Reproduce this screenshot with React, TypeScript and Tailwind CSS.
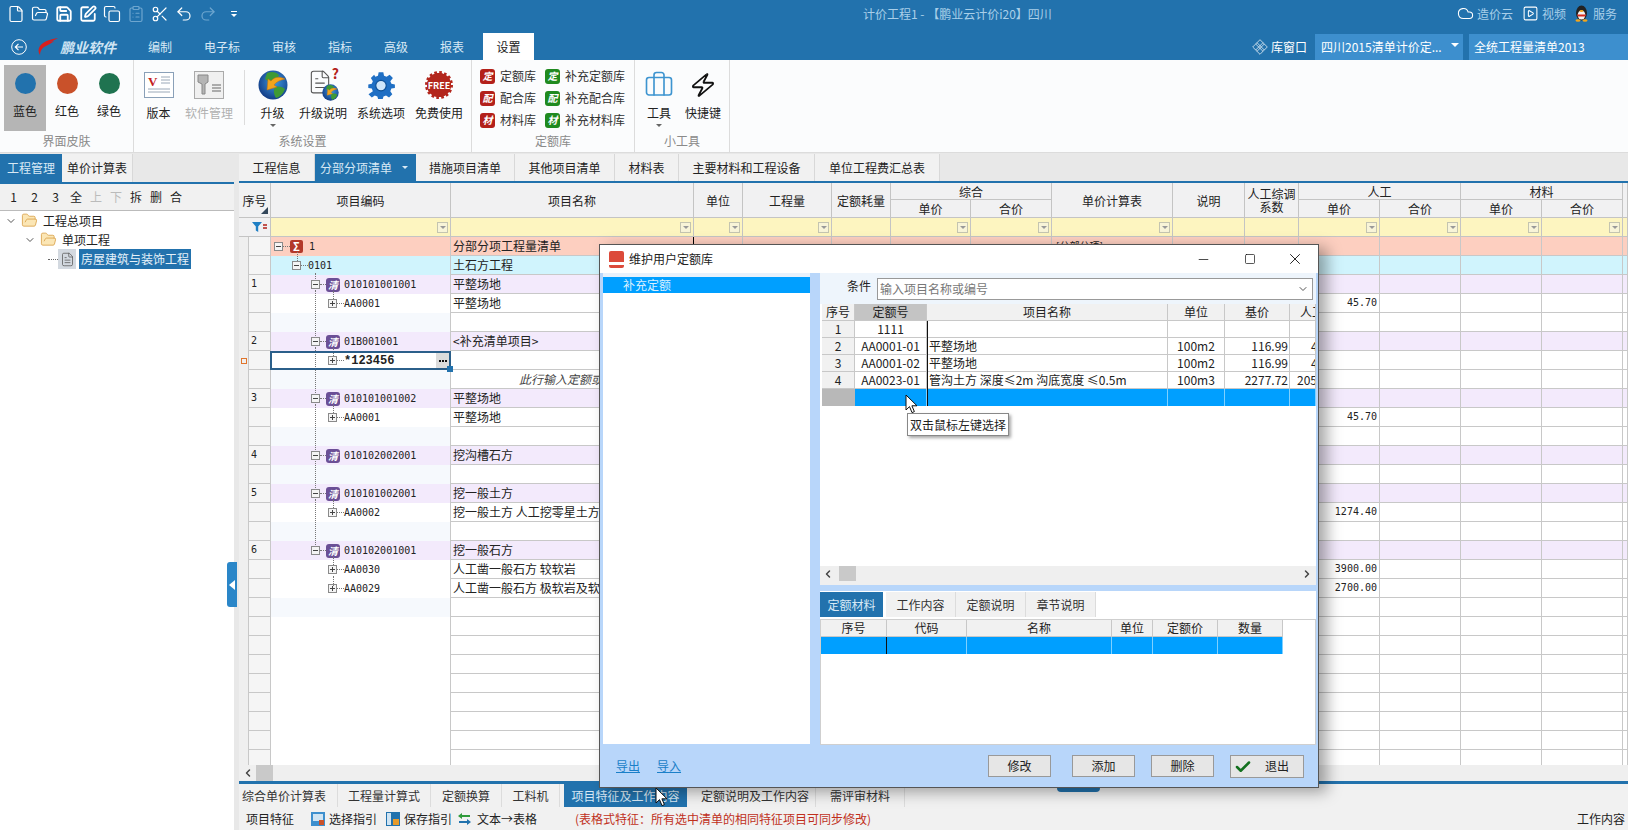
import { Briefcase, ChevronDown, ChevronLeft, ChevronRight, ChevronDown as Chev, ClipboardList, Cloud, Copy, File, FileText, FolderOpen, Redo2, Save, Scissors, SquarePen, SquarePlay, Undo2, X, Minus, Square, Zap, Check } from 'lucide-react';

const GRID = 'grid grid-cols-[9px_23px_180px_243px_49px_89px_59px_80px_81px_121px_72px_54px_81px_81px_81px_81px_1fr]';
const CELL = 'border-r border-b border-[#c8c8c8]';
const MONO = "font-['DejaVu_Sans_Mono',monospace] text-[10px]";

type Row = {
  seq?: string;
  level?: number;
  kind?: 'sum' | 'qing' | 'ding' | 'part';
  code?: string;
  name?: string;
  price?: string;
  bg?: string;
};

const PURPLE = 'bg-[#f3eafc]';

const rows: Row[] = [
  { level: 0, kind: 'sum', code: '1', name: '分部分项工程量清单', bg: 'bg-[#fdcfc0]' },
  { level: 1, kind: 'part', code: '0101', name: '土石方工程', bg: 'bg-[#d0f4fd]' },
  { seq: '1', level: 2, kind: 'qing', code: '010101001001', name: '平整场地', bg: PURPLE },
  { level: 3, kind: 'ding', code: 'AA0001', name: '平整场地', price: '45.70' },
  {},
  { seq: '2', level: 2, kind: 'qing', code: '01B001001', name: '<补充清单项目>', bg: PURPLE },
  { level: 3, kind: 'ding', code: '*123456' },
  { name: '此行输入定额或清单' },
  { seq: '3', level: 2, kind: 'qing', code: '010101001002', name: '平整场地', bg: PURPLE },
  { level: 3, kind: 'ding', code: 'AA0001', name: '平整场地', price: '45.70' },
  {},
  { seq: '4', level: 2, kind: 'qing', code: '010102002001', name: '挖沟槽石方', bg: PURPLE },
  {},
  { seq: '5', level: 2, kind: 'qing', code: '010101002001', name: '挖一般土方', bg: PURPLE },
  { level: 3, kind: 'ding', code: 'AA0002', name: '挖一般土方 人工挖零星土方', price: '1274.40' },
  {},
  { seq: '6', level: 2, kind: 'qing', code: '010102001001', name: '挖一般石方', bg: PURPLE },
  { level: 3, kind: 'ding', code: 'AA0030', name: '人工凿一般石方 较软岩', price: '3900.00' },
  { level: 3, kind: 'ding', code: 'AA0029', name: '人工凿一般石方 极软岩及软岩', price: '2700.00' },
  {},
  { code: '' }, { code: '' }, { code: '' }, { code: '' }, { code: '' }, { code: '' }, { code: '' }, { code: '' },
];

const levelPad = ['pl-[3px]', 'pl-[21px]', 'pl-[40px]', 'pl-[57px]'];

function ExpandBox({ plus }: { plus?: boolean }) {
  return (
    <svg width="9" height="9" viewBox="0 0 9 9" className="shrink-0">
      <rect x="0.5" y="0.5" width="8" height="8" fill="#f4f4f4" stroke="#8a8a8a" />
      <path d="M2 4.5h5" stroke="#444" />
      {plus && <path d="M4.5 2v5" stroke="#444" />}
    </svg>
  );
}

function FilterBox() {
  return (
    <div className="flex h-[11px] w-[11px] items-center justify-center border border-[#c4c4b0] bg-[#f8f4d8]">
      <div className="h-0 w-0 border-x-[3px] border-t-[3px] border-x-transparent border-t-[#999]" />
    </div>
  );
}

function RibbonBtn({ label, icon, w, muted, arrow }: { label: string; icon: React.ReactNode; w: string; muted?: boolean; arrow?: boolean }) {
  return (
    <div className={`relative flex h-[66px] shrink-0 flex-col items-center ${w}`}>
      <div className="flex h-[40px] items-center justify-center">{icon}</div>
      <div className={`h-[16px] whitespace-nowrap text-[12px] leading-[16px] ${muted ? 'text-[#b0b0b0]' : 'text-[#222]'}`}>{label}</div>
      {arrow && <div className="mt-[3px] h-0 w-0 border-x-[3px] border-t-[3px] border-x-transparent border-t-[#666]" />}
    </div>
  );
}

function SkinBtn({ label, color, active }: { label: string; color: string; active?: boolean }) {
  return (
    <div className={`flex h-[66px] w-[42px] flex-col items-center pt-[8px] ${active ? 'bg-[#b5b5b5]' : ''}`}>
      <div className={`h-[21px] w-[21px] rounded-full ${color}`} />
      <div className="mt-[9px] text-[12px] leading-[16px] text-[#222]">{label}</div>
    </div>
  );
}

function DbItem({ ch, label, green }: { ch: string; label: string; green?: boolean }) {
  return (
    <div className="flex h-[22px] items-center gap-[5px]">
      <div className={`flex h-[15px] w-[15px] items-center justify-center rounded-[3px] text-[10px] font-bold italic leading-none text-white ${green ? 'bg-[#1f8a1f]' : 'bg-[#b3201a]'}`}>{ch}</div>
      <span className="whitespace-nowrap text-[12px] leading-[16px] text-[#333]">{label}</span>
    </div>
  );
}

function Group({ title, w, children }: { title: string; w: string; children: React.ReactNode }) {
  return (
    <div className={`flex h-full shrink-0 flex-col border-r border-[#dcdcdc] ${w}`}>
      <div className="h-[71px] pt-[5px]">{children}</div>
      <div className="flex-1 text-center text-[12px] leading-[20px] text-[#8a8a8a]">{title}</div>
    </div>
  );
}

function Globe({ size = 30 }: { size?: number }) {
  return (
    <svg width={size} height={size} viewBox="0 0 30 30">
      <defs>
        <radialGradient id="globeFill" cx="0.55" cy="0.4" r="0.7">
          <stop offset="0" stopColor="#3f9be0" />
          <stop offset="1" stopColor="#0c2f7a" />
        </radialGradient>
      </defs>
      <circle cx="15" cy="15" r="14.5" fill="url(#globeFill)" />
      <path d="M9 3c5-2 9-1 12 2-1 4-4 3-6 5-3 2-6 1-8-1zM17 17c4-1 8 0 10 2-2 5-5 8-9 9-2-3-3-8-1-11z" fill="#3f9a35" />
      <path d="M27 9c-6-3-11-2-14 2l-3-2-1 11 10-3-3-2c2-3 6-5 11-6z" fill="#f3a41c" stroke="#c46f0a" strokeWidth="0.5" />
    </svg>
  );
}

function Cursor() {
  return (
    <svg width="13" height="21" viewBox="0 0 13 21">
      <path d="M1 1v15l3.5-3.4 2.5 6 2.4-1-2.5-5.8H12z" fill="#fff" stroke="#111" strokeWidth="1" />
    </svg>
  );
}

function Penguin() {
  return (
    <svg width="15" height="17" viewBox="0 0 15 17">
      <ellipse cx="7.5" cy="8" rx="5.5" ry="7.5" fill="#222" />
      <ellipse cx="7.5" cy="10" rx="3.8" ry="4.5" fill="#f4f4f4" />
      <path d="M3 9.5h9l-1 2H4z" fill="#d8291c" />
      <ellipse cx="7.5" cy="6" rx="2" ry="1" fill="#f2a51c" />
      <ellipse cx="4" cy="15.5" rx="2.5" ry="1.2" fill="#f2a51c" />
      <ellipse cx="11" cy="15.5" rx="2.5" ry="1.2" fill="#f2a51c" />
    </svg>
  );
}

function TitleBar() {
  const icons = [File, FolderOpen, Save, SquarePen, Copy, ClipboardList, Scissors, Undo2, Redo2];
  return (
    <div className="flex h-[33px] items-center pb-[6px] text-[12px] text-[#a9cfe9]">
      <div className="flex w-[863px] items-center pl-[4px]">
        {icons.map((Icon, i) => (
          <div key={i} className="flex w-[24px] justify-center">
            <Icon size={18} strokeWidth={i > 1 && i < 4 ? 2.4 : 1.6} className={i === 5 || i === 8 ? 'text-[#6ea6cf]' : 'text-white'} />
          </div>
        ))}
        <div className="ml-[11px] flex flex-col items-center gap-[2px]">
          <div className="h-px w-[6px] bg-white" />
          <div className="h-0 w-0 border-x-[3px] border-t-[3px] border-x-transparent border-t-white" />
        </div>
      </div>
      <div className="whitespace-nowrap">计价工程1 - 【鹏业云计价i20】四川</div>
      <div className="ml-auto flex items-center pr-[11px]">
        <Cloud size={17} strokeWidth={1.5} className="text-white" />
        <span className="ml-[3px]">造价云</span>
        <SquarePlay size={17} strokeWidth={1.5} className="ml-[9px] text-white" />
        <span className="ml-[3px]">视频</span>
        <div className="ml-[8px]"><Penguin /></div>
        <span className="ml-[4px]">服务</span>
      </div>
    </div>
  );
}

function NavBar() {
  const tabs = [
    ['编制', 'w-[56px]'], ['电子标', 'w-[68px]'], ['审核', 'w-[56px]'],
    ['指标', 'w-[56px]'], ['高级', 'w-[56px]'], ['报表', 'w-[56px]'],
  ];
  return (
    <div className="flex h-[27px] items-stretch text-[12px]">
      <div className="flex w-[132px] items-center pl-[11px]">
        <svg width="16" height="16" viewBox="0 0 16 16" className="shrink-0">
          <circle cx="8" cy="8" r="7.3" fill="none" stroke="#fff" />
          <path d="M12 8H4.5M7.5 4.8 4.3 8l3.2 3.2" fill="none" stroke="#fff" strokeWidth="1.2" />
        </svg>
        <svg width="22" height="20" viewBox="0 0 22 20" className="ml-[10px] shrink-0">
          <path d="M21 1C14 2 7 4 3 9c-2 3-2 6 0 9 0-3 1-6 4-8 4-2 8-4 10-6l-5 1c3-1 6-2 9-4z" fill="#d81e1e" />
        </svg>
        <span className="ml-px whitespace-nowrap text-[14px] font-bold italic leading-none text-[#cfe4f3]">鹏业软件</span>
      </div>
      {tabs.map(([t, w]) => (
        <div key={t} className={`flex items-center justify-center text-[#d8e9f5] ${w}`}>{t}</div>
      ))}
      <div className="ml-[3px] flex w-[51px] items-center justify-center bg-white text-[#222]">设置</div>
      <div className="ml-auto flex items-stretch pt-[1px] text-white">
        <div className="flex items-center pr-[8px]">
          <svg width="16" height="16" viewBox="0 0 16 16">
            <path d="M8 .7 15.3 8 8 15.3.7 8z M5 3.7 12.3 11M3.7 5 11 12.3M11 3.7 3.7 11M12.3 5 5 12.3" fill="none" stroke="#fff" strokeWidth="0.7" />
          </svg>
          <span className="ml-[3px]">库窗口</span>
        </div>
        <div className="flex w-[148px] items-center justify-between bg-[#3d8fce] pl-[6px] pr-[4px]">
          <span className="whitespace-nowrap">四川2015清单计价定...</span>
          <div className="mb-[4px] h-0 w-0 border-x-[4px] border-t-[4px] border-x-transparent border-t-white" />
        </div>
        <div className="ml-[6px] flex w-[159px] items-center bg-[#3d8fce] pl-[5px]">全统工程量清单2013</div>
      </div>
    </div>
  );
}

function Ribbon() {
  return (
    <div className="flex h-[93px] border-b border-[#dcdcdc] bg-[#fbfcfd]">
      <Group title="界面皮肤" w="w-[134px]">
        <div className="flex pl-[4px]">
          <SkinBtn label="蓝色" color="bg-[#2272ad]" active />
          <SkinBtn label="红色" color="bg-[#c9512a]" />
          <SkinBtn label="绿色" color="bg-[#1f7350]" />
        </div>
      </Group>
      <Group title="系统设置" w="w-[338px]">
        <div className="flex">
          <RibbonBtn w="w-[49px]" label="版本" icon={
            <svg width="30" height="26" viewBox="0 0 30 26">
              <rect x="0.5" y="0.5" width="29" height="25" fill="#fff" stroke="#8aa0b8" />
              <text x="4" y="14" fontSize="13" fontWeight="700" fontFamily="Liberation Serif" fill="#c4201c">V</text>
              <path d="M17 5h9M17 8h9M17 11h9M4 17h22M4 20h22" stroke="#9aa8b8" />
            </svg>} />
          <RibbonBtn w="w-[52px]" muted label="软件管理" icon={
            <svg width="30" height="28" viewBox="0 0 30 28">
              <rect x="0.5" y="0.5" width="29" height="27" fill="#f0f0f0" stroke="#aaa" />
              <path d="M4 4h10v7l-3 2v10H8v-10L4 11z" fill="#b5b5b5" stroke="#888" />
              <path d="M18 14h9M18 17h9M18 20h9" stroke="#666" />
            </svg>} />
          <div className="ml-[9px] mr-[3px] mt-[5px] h-[55px] w-px bg-[#dcdcdc]" />
          <RibbonBtn w="w-[49px]" arrow label="升级" icon={<Globe />} />
          <RibbonBtn w="w-[52px]" label="升级说明" icon={
            <div className="relative h-[32px] w-[32px]">
              <FileText size={26} strokeWidth={1} className="absolute left-0 top-0 text-[#555]" />
              <span className="absolute right-0 top-[-4px] text-[14px] font-bold leading-[16px] text-[#b3201a]">?</span>
              <div className="absolute bottom-0 right-0"><Globe size={17} /></div>
            </div>} />
          <RibbonBtn w="w-[64px]" label="系统选项" icon={
            <svg width="28" height="28" viewBox="0 0 24 24">
              <path d="M10 1h4l.6 3 2.2 1 2.6-1.7 2.8 2.8L20 8.7l.9 2.2 3 .6v3l-3 .6-.9 2.2 1.7 2.6-2.8 2.8-2.6-1.7-2.2.9-.6 2h-4l-.6-2-2.2-.9-2.6 1.7-2.8-2.8L5 17.300l-.9-2.200-3-.6v-3l3-.6.9-2.200-1.700-2.600 2.800-2.800L7.200 5l2.200-1z" fill="#1f6fc4" />
              <circle cx="12" cy="12.500" r="4.500" fill="#cfe6fa" stroke="#0c4f96" />
            </svg>} />
          <RibbonBtn w="w-[52px]" label="免费使用" icon={
            <div className="relative flex h-[28px] w-[28px] items-center justify-center">
              <svg width="28" height="28" viewBox="0 0 28 28" className="absolute inset-0">
                <circle cx="14" cy="14" r="12" fill="#b3261c" stroke="#b3261c" strokeWidth="4" strokeDasharray="2.500 2.200" />
                <circle cx="14" cy="14" r="12" fill="#b3261c" />
              </svg>
              <span className="relative text-[9px] font-bold leading-none text-white">FREE</span>
            </div>} />
        </div>
      </Group>
      <Group title="定额库" w="w-[163px]">
        <div className="grid grid-cols-[65px_1fr] pl-[8px]">
          <DbItem ch="定" label="定额库" />
          <DbItem ch="定" label="补充定额库" green />
          <DbItem ch="配" label="配合库" />
          <DbItem ch="配" label="补充配合库" green />
          <DbItem ch="材" label="材料库" />
          <DbItem ch="材" label="补充材料库" green />
        </div>
      </Group>
      <Group title="小工具" w="w-[95px]">
        <div className="flex pl-[2px]">
          <RibbonBtn w="w-[44px]" arrow label="工具" icon={<Briefcase size={30} strokeWidth={1.3} className="text-[#3d94d0]" />} />
          <RibbonBtn w="w-[44px]" label="快捷键" icon={<Zap size={26} strokeWidth={1.8} className="-skew-x-12 text-[#111]" />} />
        </div>
      </Group>
    </div>
  );
}

function LeftPanel() {
  const tools = [
    ['1', 'w-[21px]'], ['2', 'w-[21px]'], ['3', 'w-[21px]'], ['全', 'w-[20px]'], ['上', 'w-[20px] text-[#bbb]'],
    ['下', 'w-[20px] text-[#bbb]'], ['拆', 'w-[20px]'], ['删', 'w-[20px]'], ['合', 'w-[20px]'],
  ];
  return (
    <div className="flex w-[234px] shrink-0 flex-col">
      <div className="mt-px flex h-[28px] text-[12px]">
        <div className="flex w-[62px] items-center justify-center bg-[#2272ad] text-[#d8e9f5]">工程管理</div>
        <div className="flex w-[71px] items-center justify-center border-r border-[#d8d8d8] bg-[#f1f1f1] text-[#222]">单价计算表</div>
      </div>
      <div className="h-[2px] bg-[#2272ad]" />
      <div className="flex h-[26px] items-center bg-[#f1f1f1] pl-[3px] text-[12px] text-[#222]">
        {tools.map(([t, c]) => (
          <div key={t} className={`text-center ${c}`}>{t}</div>
        ))}
      </div>
      <div className="relative flex-1 border-t border-[#bbb] bg-white text-[12px] text-[#222]">
        <div className="flex h-[19px] items-center pl-[5px]">
          <Chev size={12} strokeWidth={2} className="text-[#555]" />
          <FolderOpen size={17} strokeWidth={1.2} className="ml-[4px] fill-[#fbe6b5] text-[#d9a24a]" />
          <span className="ml-[5px]">工程总项目</span>
        </div>
        <div className="flex h-[19px] items-center pl-[24px]">
          <Chev size={12} strokeWidth={2} className="text-[#555]" />
          <FolderOpen size={17} strokeWidth={1.2} className="ml-[4px] fill-[#fbe6b5] text-[#d9a24a]" />
          <span className="ml-[5px]">单项工程</span>
        </div>
        <div className="flex h-[20px] items-center pl-[48px]">
          <div className="h-px w-[10px] border-t border-dotted border-[#666]" />
          <div className="flex h-[20px] w-[18px] items-center justify-center bg-[#d3d9e0]">
            <FileText size={15} strokeWidth={1.2} className="text-[#555]" />
          </div>
          <div className="ml-[3px] flex h-[20px] w-[112px] items-center justify-center whitespace-nowrap bg-[#2272ad] text-[#e5f1f9]">房屋建筑与装饰工程</div>
        </div>
      </div>
    </div>
  );
}

function MainTabs() {
  const tabs = [
    ['工程信息', 'w-[76px]'],
    ['措施项目清单', 'w-[99px]'], ['其他项目清单', 'w-[100px]'], ['材料表', 'w-[64px]'],
    ['主要材料和工程设备', 'w-[136px]'], ['单位工程费汇总表', 'w-[125px]'],
  ];
  return (
    <div className="mt-px flex h-[27px] text-[12px] text-[#222]">
      <div className={`flex items-center justify-center border-r border-[#d8d8d8] bg-[#f1f1f1] ${tabs[0][1]}`}>{tabs[0][0]}</div>
      <div className="flex w-[101px] items-center justify-between bg-[#2272ad] pl-[5px] pr-[8px] text-[#d8e9f5]">
        分部分项清单
        <div className="h-0 w-0 border-x-[3px] border-t-[3px] border-x-transparent border-t-[#d8e9f5]" />
      </div>
      {tabs.slice(1).map(([t, w]) => (
        <div key={t} className={`flex items-center justify-center border-r border-[#d8d8d8] bg-[#f1f1f1] ${w}`}>{t}</div>
      ))}
    </div>
  );
}

function GridHead() {
  const HEAD = 'flex items-center justify-center border-r border-b border-[#c4c4c4] bg-[#f1f1f2] text-[12px] leading-[13px] text-[#222]';
  return (
    <>
      <div className={`${GRID} grid-rows-[17px_18px]`}>
        <div className={`relative col-span-2 row-span-2 ${HEAD}`}>
          序号
          <div className="absolute bottom-[3px] right-[2px] h-0 w-0 border-b-[7px] border-l-[7px] border-b-[#33475b] border-l-transparent" />
        </div>
        <div className={`row-span-2 ${HEAD}`}>项目编码</div>
        <div className={`row-span-2 ${HEAD}`}>项目名称</div>
        <div className={`row-span-2 ${HEAD}`}>单位</div>
        <div className={`row-span-2 ${HEAD}`}>工程量</div>
        <div className={`row-span-2 ${HEAD}`}>定额耗量</div>
        <div className={`col-span-2 ${HEAD}`}>综合</div>
        <div className={`row-span-2 ${HEAD}`}>单价计算表</div>
        <div className={`row-span-2 ${HEAD}`}>说明</div>
        <div className={`row-span-2 whitespace-pre-line text-center ${HEAD}`}>{'人工综调\n系数'}</div>
        <div className={`col-span-2 ${HEAD}`}>人工</div>
        <div className={`col-span-2 ${HEAD}`}>材料</div>
        <div className={`row-span-2 ${HEAD}`} />
        <div className={HEAD}>单价</div>
        <div className={HEAD}>合价</div>
        <div className={HEAD}>单价</div>
        <div className={HEAD}>合价</div>
        <div className={HEAD}>单价</div>
        <div className={HEAD}>合价</div>
      </div>
      <div className={`${GRID} h-[19px] bg-[#fdf5c0]`}>
        <div className="col-span-2 flex items-center justify-end border-r border-b border-[#c4c4c4] bg-[#f1f1f2] pr-[2px]">
          <svg width="16" height="10" viewBox="0 0 16 10">
            <path d="M0 0h10L6.200 4.500V10L3.800 8.500V4.500z" fill="#1f7fc4" />
            <path d="M11 3h4M11 6h4" stroke="#b3201a" strokeWidth="1.400" />
          </svg>
        </div>
        {[true, true, true, true, false, true, true, true, false, false, true, true, true, true, false].map((f, i) => (
          <div key={i} className="flex items-center justify-end border-r border-b border-[#c4c4c4] pr-[2px]">
            {f && <FilterBox />}
          </div>
        ))}
      </div>
    </>
  );
}

function Link() {
  return <span className="w-[7px] shrink-0 border-t border-dotted border-[#777]" />;
}

function DataRow({ row, i }: { row: Row; i: number }) {
  const selected = i === 6;
  const blank = !row.code && !row.bg;
  const before = Array.from({ length: 8 });
  return (
    <div className={`${GRID} h-[19px] text-[12px] leading-[18px] text-[#222] ${row.bg ?? 'bg-white'}`}>
      <div className="flex items-center justify-center bg-[#efefef]">
        {selected && <div className="h-[6px] w-[6px] border border-[#e0752c]" />}
      </div>
      <div className={`${CELL} border-l bg-[#f5f5f5] pl-[2px] ${MONO} leading-[18px]`}>{row.seq}</div>
      <div className={`relative flex items-center border-r border-[#c8c8c8] ${levelPad[row.level ?? 0]} ${blank && i < 20 ? 'bg-[#f6f9fd]' : ''}`}>
        {row.kind && <ExpandBox plus={row.kind === 'ding'} />}
        {row.kind === 'sum' && (
          <>
            <Link />
            <span className="flex h-[13px] w-[13px] items-center justify-center rounded-[2px] bg-[#b3392a] text-[11px] font-bold leading-none text-white">Σ</span>
            <span className={`ml-[6px] ${MONO}`}>{row.code}</span>
          </>
        )}
        {row.kind === 'part' && (
          <>
            <Link />
            <span className={MONO}>{row.code}</span>
          </>
        )}
        {row.kind === 'qing' && (
          <>
            <span className="w-[6px] shrink-0 border-t border-dotted border-[#777]" />
            <span className="flex h-[14px] w-[14px] items-center justify-center rounded-[3px] bg-[#6b4f96] text-[10px] font-bold italic leading-none text-white">清</span>
            <span className={`ml-[4px] ${MONO}`}>{row.code}</span>
          </>
        )}
        {row.kind === 'ding' && (
          <>
            <Link />
            {selected
              ? <span className="font-['Liberation_Mono',monospace] text-[12px] font-bold">{row.code}</span>
              : <span className={MONO}>{row.code}</span>}
          </>
        )}
        {selected && (
          <div className="absolute inset-x-[-1px] inset-y-0 z-10 border-2 border-[#2b5f8a]">
            <div className="absolute right-0 top-0 flex h-[15px] w-[13px] items-center justify-center gap-px bg-[#dcdcdc]">
              <span className="h-[2px] w-[2px] bg-[#111]" />
              <span className="h-[2px] w-[2px] bg-[#111]" />
              <span className="h-[2px] w-[2px] bg-[#111]" />
            </div>
            <div className="absolute bottom-[-4px] right-[-4px] h-[6px] w-[6px] bg-[#2272ad]" />
          </div>
        )}
      </div>
      <div className={`${CELL} overflow-hidden whitespace-nowrap pl-[2px] ${i === 0 ? 'border-r-black' : ''} ${i === 7 ? 'pl-[68px] italic text-[#444]' : ''}`}>{row.name}</div>
      {before.map((_, c) => <div key={c} className={`${CELL} ${c === 5 && i === 0 ? 'overflow-hidden whitespace-nowrap pl-[4px] text-[10px]' : ''}`}>{c === 5 && i === 0 ? '[分部分项]' : null}</div>)}
      <div className={`${CELL} pr-[2px] text-right ${MONO} leading-[18px]`}>{row.price}</div>
      <div className={CELL} />
      <div className={CELL} />
      <div className={CELL} />
      <div className={CELL} />
    </div>
  );
}

function GridBody() {
  const stubs = [[2, 8], [5, 8], [8, 8], [13, 8], [16, 8], [17, 10]];
  // dotted tree spine, one piece between each pair of expand boxes
  const spine = [[36, 6], [53, 46], [110, 46], [167, 46], [224, 27], [262, 46]];
  return (
    <div className="relative flex-1 overflow-hidden">
      {rows.map((r, i) => <DataRow key={i} row={r} i={i} />)}
      <div className="absolute left-[58px] top-[15px] h-[9px] border-l border-dotted border-[#777]" />
      {spine.map(([top, h]) => (
        <div key={top} className="absolute left-[76px] border-l border-dotted border-[#777]" style={{ top, height: h }} />
      ))}
      {stubs.map(([n, h]) => (
        <div key={n} className="absolute left-[94px] border-l border-dotted border-[#777]" style={{ top: n * 19 + 16, height: h }} />
      ))}
    </div>
  );
}

function BottomTabs() {
  const before = [['工程量计算式', 'w-[93px]'], ['定额换算', 'w-[71px]'], ['工料机', 'w-[58px]']];
  return (
    <div className="flex h-[23px] bg-[#f1f1f1] text-[12px] leading-[23px] text-[#333]">
      <div className="w-[99px] border-r border-[#dcdcdc] pl-[3px]">综合单价计算表</div>
      {before.map(([t, w]) => <div key={t} className={`border-r border-[#dcdcdc] text-center ${w}`}>{t}</div>)}
      <div className="ml-[4px] w-[123px] bg-[#2272ad] text-center text-[#d8e9f5]">项目特征及工作内容</div>
      <div className="w-[129px] border-r border-[#dcdcdc] pl-[8px] text-center">定额说明及工作内容</div>
      <div className="w-[89px] border-r border-[#dcdcdc] text-center">需评审材料</div>
    </div>
  );
}

function BottomTools() {
  return (
    <div className="flex h-[23px] items-center bg-[#f1f1f1] pl-[7px] text-[12px] text-[#222]">
      <span>项目特征</span>
      <svg width="14" height="14" viewBox="0 0 14 14" className="ml-[17px]">
        <rect width="14" height="14" fill="#3d8fce" /><rect x="2" y="2" width="10" height="7" fill="#cfe4f3" /><rect x="8" y="8" width="5" height="5" fill="#c9512a" />
      </svg>
      <span className="ml-[4px]">选择指引</span>
      <svg width="14" height="14" viewBox="0 0 14 14" className="ml-[9px]">
        <rect width="14" height="14" fill="#2272ad" /><rect x="1" y="1" width="4" height="12" fill="#cfe4f3" /><rect x="7" y="7" width="6" height="6" fill="#e59a2c" />
      </svg>
      <span className="ml-[4px]">保存指引</span>
      <svg width="13" height="12" viewBox="0 0 13 12" className="ml-[6px]">
        <path d="M4 0 0 3l4 3V4h8V2H4z" fill="#2f9a3a" /><path d="M9 6l4 3-4 3v-2H1V8h8z" fill="#2272ad" />
      </svg>
      <span className="ml-[6px]">文本→表格</span>
      <span className="ml-[38px] text-[#c0301c]">(表格式特征：所有选中清单的相同特征项目可同步修改)</span>
      <span className="ml-auto pr-[3px]">工作内容</span>
    </div>
  );
}

function LibraryDialog() {
  const T = 'border-r border-b border-[#c8c8c8] text-[12px] leading-[16px] text-[#222]';
  const HT = 'grid grid-cols-[33px_72px_241px_57px_65px_1fr]';
  const list = [
    ['1', '1111', '', '', '', ''],
    ['2', 'AA0001-01', '平整场地', '100m2', '116.99', 'pl-[21px]'],
    ['3', 'AA0001-02', '平整场地', '100m2', '116.99', 'pl-[21px]'],
    ['4', 'AA0023-01', '管沟土方 深度≤2m 沟底宽度 ≤0.5m', '100m3', '2277.72', 'pl-[7px]'],
  ];
  const lower = 'grid grid-cols-[66px_80px_145px_41px_65px_65px]';
  return (
    <div className="absolute left-[599px] top-[244px] z-20 flex h-[544px] w-[720px] flex-col border border-[#555] bg-[#b8d6fa] text-[12px] shadow-[8px_4px_14px_rgba(0,0,0,0.35)]">
      <div className="flex h-[28px] shrink-0 items-center bg-white pl-[9px] text-[#222]">
        <div className="h-[17px] w-[15px] overflow-hidden rounded-[2px] bg-[#dc4a3a]">
          <div className="mt-[11px] h-[3px] bg-white" />
        </div>
        <span className="ml-[5px]">维护用户定额库</span>
        <div className="ml-auto flex items-center pr-[14px] text-[#111]">
          <Minus size={15} strokeWidth={1.2} />
          <Square size={12} strokeWidth={1.4} className="ml-[33px]" />
          <X size={18} strokeWidth={1.2} className="ml-[30px]" />
        </div>
      </div>
      <div className="flex min-h-0 flex-1 pl-[3px]">
        <div className="mb-px w-[207px] border-t-[4px] border-[#e8f1fb] bg-white">
          <div className="h-[16px] bg-[#009fff] pl-[20px] leading-[16px] text-[#d9f0ff]">补充定额</div>
        </div>
        <div className="ml-[10px] flex w-[496px] flex-col">
          <div className="flex h-[31px] shrink-0 items-start bg-[#eef5fc] pl-[27px] pt-[5px]">
            <span className="shrink-0 whitespace-nowrap leading-[16px] text-[#222]">条件</span>
            <div className="ml-[6px] flex h-[22px] w-[436px] shrink-0 items-center justify-between border border-[#999] bg-white pl-[2px] pr-[3px] text-[#777]">
              输入项目名称或编号
              <ChevronDown size={12} className="text-[#555]" />
            </div>
          </div>
          <div className="relative min-h-0 flex-[0_0_262px] bg-white pl-[2px]">
            <div className={HT}>
              <div className={`${T} h-[17px] bg-[#f1f1f1] text-center`}>序号</div>
              <div className={`${T} bg-[#c4c4c4] text-center`}>定额号</div>
              <div className={`${T} bg-[#f1f1f1] text-center`}>项目名称</div>
              <div className={`${T} bg-[#f1f1f1] text-center`}>单位</div>
              <div className={`${T} bg-[#f1f1f1] text-center`}>基价</div>
              <div className={`${T} overflow-hidden whitespace-nowrap bg-[#f1f1f1] pl-[10px]`}>人工</div>
            </div>
            {list.map(r => (
              <div key={r[0]} className={HT}>
                <div className={`${T} h-[17px] bg-[#f1f1f1] text-center`}>{r[0]}</div>
                <div className={`${T} text-center`}>{r[1]}</div>
                <div className={`${T} whitespace-nowrap pl-[2px]`}>{r[2]}</div>
                <div className={`${T} text-center`}>{r[3]}</div>
                <div className={`${T} pr-[1px] text-right`}>{r[4]}</div>
                <div className={`${T} overflow-hidden whitespace-nowrap ${r[5]}`}>{r[0] === '4' ? '2053.00' : r[5] ? '45.70' : ''}</div>
              </div>
            ))}
            <div className={HT}>
              <div className="h-[17px] bg-[#b8b8b8]" />
              {[0, 1, 2, 3, 4].map(c => <div key={c} className="border-r border-[#7fd0ff] bg-[#009fff]" />)}
            </div>
            <div className="absolute left-[107px] top-[17px] h-[85px] w-px bg-[#111]" />
          </div>
          <div className="flex h-[15px] shrink-0 items-center justify-between bg-[#efefef] pl-[2px] pr-[3px] text-[#444]">
            <div className="flex items-center">
              <ChevronLeft size={12} strokeWidth={3} />
              <div className="ml-[5px] h-[15px] w-[17px] bg-[#c9c9c9]" />
            </div>
            <ChevronRight size={12} strokeWidth={3} />
          </div>
          <div className="h-[4px] shrink-0 bg-[#efefef]" />
          <div className="h-[6px] shrink-0" />
          <div className="flex h-[28px] shrink-0 items-stretch bg-white pb-[2px] pt-px text-[#333]">
            <div className="flex w-[63px] items-center justify-center bg-[#2272ad] text-[#d8e9f5]">定额材料</div>
            <div className="ml-[3px] flex w-[70px] items-center justify-center border-r border-[#dcdcdc] bg-[#f1f1f1]">工作内容</div>
            <div className="flex w-[70px] items-center justify-center border-r border-[#dcdcdc] bg-[#f1f1f1]">定额说明</div>
            <div className="flex w-[70px] items-center justify-center border-r border-[#dcdcdc] bg-[#f1f1f1]">章节说明</div>
          </div>
          <div className="min-h-0 flex-1 border border-[#cfcfcf] bg-white">
            <div className={lower}>
              {['序号', '代码', '名称', '单位', '定额价', '数量'].map(t => (
                <div key={t} className={`${T} h-[17px] bg-[#f1f1f1] text-center`}>{t}</div>
              ))}
            </div>
            <div className={`relative ${lower}`}>
              {[0, 1, 2, 3, 4, 5].map(c => <div key={c} className="h-[17px] border-r border-[#7fd0ff] bg-[#009fff]" />)}
              <div className="absolute left-[65px] top-0 h-[17px] w-px bg-[#111]" />
            </div>
          </div>
        </div>
      </div>
      <div className="flex h-[42px] shrink-0 items-center pl-[16px]">
        <span className="shrink-0 whitespace-nowrap text-[#1a7fc8] underline">导出</span>
        <span className="ml-[17px] shrink-0 whitespace-nowrap text-[#1a7fc8] underline">导入</span>
        <button className="ml-[307px] h-[22px] w-[63px] shrink-0 border border-[#999] bg-[#e6e6e6] text-[#222]">修改</button>
        <button className="ml-[21px] h-[22px] w-[63px] shrink-0 border border-[#999] bg-[#e6e6e6] text-[#222]">添加</button>
        <button className="ml-[16px] h-[22px] w-[63px] shrink-0 border border-[#999] bg-[#e6e6e6] text-[#222]">删除</button>
        <button className="relative ml-[16px] h-[23px] w-[74px] shrink-0 border border-[#999] bg-[#e6e6e6] pl-[20px] text-[#222]">
          <Check size={18} strokeWidth={3.4} className="absolute left-[3px] top-[2px] text-[#12701f]" />
          退出
        </button>
      </div>
    </div>
  );
}

export default function App() {
  return (
    <div className="relative h-[830px] w-[1628px] overflow-hidden bg-[#e8e8e8] font-['Noto_Sans_CJK_SC','Liberation_Sans',sans-serif]">
      <div className="bg-[#2272ad]">
        <TitleBar />
        <NavBar />
      </div>
      <Ribbon />
      <div className="flex h-[677px]">
        <LeftPanel />
        <div className="ml-[5px] flex min-w-0 flex-1 flex-col">
          <MainTabs />
          <div className="h-[2px] shrink-0 bg-[#2272ad]" />
          <GridHead />
          <GridBody />
          <div className="flex h-[16px] shrink-0 items-center bg-[#efefef] pl-[3px] text-[#444]">
            <ChevronLeft size={12} strokeWidth={3} />
            <div className="ml-[2px] h-[16px] w-[17px] bg-[#c9c9c9]" />
          </div>
          <div className="h-[3px] shrink-0 bg-[#2272ad]" />
          <BottomTabs />
          <BottomTools />
        </div>
      </div>

      {/* overlays: collapse handle, dialog, tooltip, mouse cursors */}
      <div className="absolute left-[227px] top-[562px] flex h-[45px] w-[10px] items-center justify-center rounded-l-[3px] bg-[#2a86c8]">
        <div className="h-0 w-0 border-y-[5px] border-r-[6px] border-y-transparent border-r-white" />
      </div>
      <div className="absolute left-[1057px] top-[786px] h-[6px] w-[43px] rounded-b-[4px] bg-[#2272ad]" />
      <LibraryDialog />
      <div className="absolute left-[907px] top-[413px] z-30 flex h-[23px] w-[102px] items-center justify-center border border-[#888] bg-white text-[12px] text-[#222] shadow-[2px_2px_3px_rgba(0,0,0,0.35)]">双击鼠标左键选择</div>
      <div className="absolute left-[905px] top-[394px] z-40"><Cursor /></div>
      <div className="absolute left-[655px] top-[787px] z-40"><Cursor /></div>
    </div>
  );
}
